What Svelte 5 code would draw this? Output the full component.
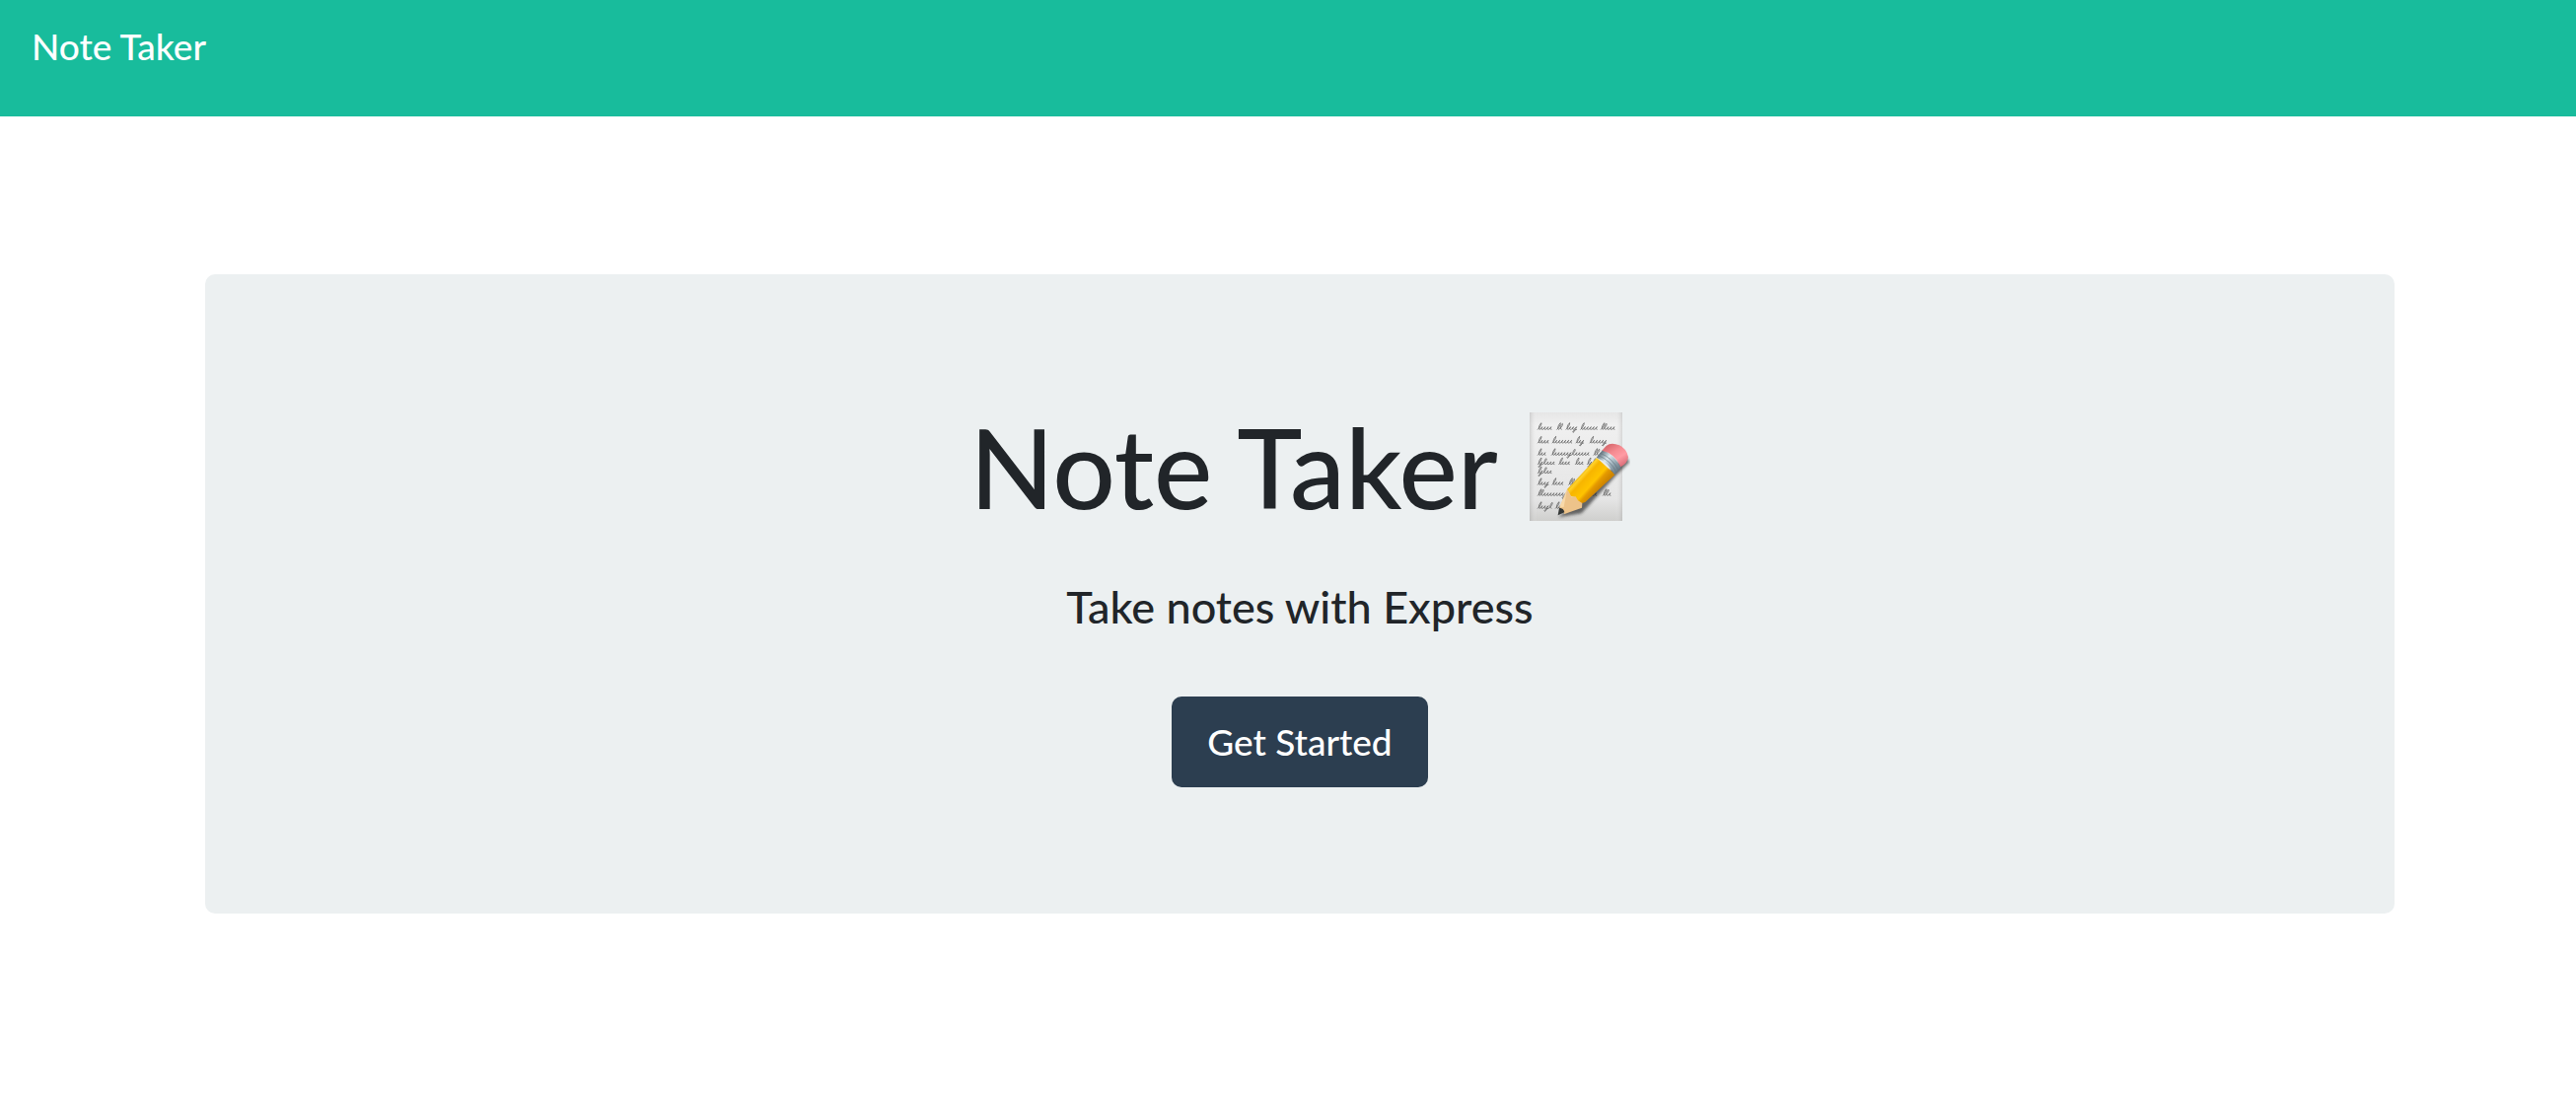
<script>
  // Word lengths for each handwritten line on the memo sheet.
  const lines = [
    { y: 109, words: [46, 16, 32, 50, 42] },
    { y: 150, words: [32, 60, 30, 52] },
    { y: 187, words: [30, 116, 32] },
    { y: 215, words: [52, 38, 24, 34] },
    { y: 242, words: [46] },
    { y: 277, words: [32, 38, 34] },
    { y: 310, words: [92, 30, 40, 26] },
    { y: 349, words: [42, 26] }
  ];

  function scribble(y, words) {
    let x = 85;
    let path = '';
    for (const [w, length] of words.entries()) {
      const steps = Math.round(length / 9) - 1;
      path += `M${x} ${y}c5 -4 12 -15 11 -20c-5 3 -11 17 -6 20`;
      for (let i = 1; i <= steps; i++) {
        const kind = (i * 5 + w * 3 + y) % 9;
        if (kind === 0) path += 'c8 -4 15 -16 12 -18c-5 2 -10 17 -3 18';
        else if (kind === 4) path += 'c4 -2 7 -6 9 -8c-4 6 -7 17 -11 17c-4 -3 5 -8 11 -9';
        else path += 'c4 -1 8 -5 9 -8c-3 1 -6 8 0 8';
      }
      x += length + 12;
    }
    return path;
  }

  const writing = lines.map((line) => scribble(line.y, line.words)).join('');
</script>

<nav class="navbar">
  <a class="brand" href="/">Note Taker</a>
</nav>

<main class="page">
  <section class="hero">
    <h1>
      <span>Note Taker</span>
      <svg class="memo" viewBox="60 57 306 330" role="img" aria-label="Memo">
        <defs>
          <linearGradient id="sheet" x1="0" y1="0" x2="0" y2="1">
            <stop offset="0" stop-color="#e6e6e6" />
            <stop offset="0.12" stop-color="#f0f0f0" />
            <stop offset="0.8" stop-color="#e5e5e5" />
            <stop offset="1" stop-color="#cfcfcd" />
          </linearGradient>
          <linearGradient id="edge">
            <stop offset="0" stop-color="#999" stop-opacity="0.35" />
            <stop offset="0.08" stop-color="#fff" stop-opacity="0" />
            <stop offset="0.92" stop-color="#fff" stop-opacity="0" />
            <stop offset="1" stop-color="#999" stop-opacity="0.3" />
          </linearGradient>
          <linearGradient id="body" gradientUnits="userSpaceOnUse" x1="212" y1="240" x2="270" y2="292">
            <stop offset="0" stop-color="#d99a00" />
            <stop offset="0.16" stop-color="#ffd22b" />
            <stop offset="0.3" stop-color="#f7b500" />
            <stop offset="0.65" stop-color="#ffc400" />
            <stop offset="0.78" stop-color="#e59a00" />
            <stop offset="1" stop-color="#ce8500" />
          </linearGradient>
          <linearGradient id="metal" gradientUnits="userSpaceOnUse" x1="276" y1="184" x2="332" y2="238">
            <stop offset="0" stop-color="#71818b" />
            <stop offset="0.3" stop-color="#dce9ef" />
            <stop offset="0.65" stop-color="#91a4af" />
            <stop offset="1" stop-color="#60717c" />
          </linearGradient>
          <linearGradient id="rubber" gradientUnits="userSpaceOnUse" x1="304" y1="152" x2="345" y2="218">
            <stop offset="0" stop-color="#d8686d" />
            <stop offset="0.35" stop-color="#f58b91" />
            <stop offset="0.65" stop-color="#ff9ca4" />
            <stop offset="1" stop-color="#db6e79" />
          </linearGradient>
          <filter id="soft" x="-20%" y="-20%" width="140%" height="140%">
            <feGaussianBlur stdDeviation="4" />
          </filter>
        </defs>
        <rect x="60" y="57" width="282" height="330" fill="url(#sheet)" />
        <rect x="60" y="57" width="282" height="330" fill="url(#edge)" />
        <path class="ink" d={writing} />
        <path d="M148 376L218 364L322 250L364 208L350 190L190 340Z" fill="#222" opacity="0.65" filter="url(#soft)" />
        <path d="M264 195L174 291L181 307L186 313L197 314L201 325L217 334L229 330L320 246Z" fill="url(#body)" />
        <path d="M174 291L151 346L166 366L219 347L220 333L207 325L200 313L187 315L182 303Z" fill="#edc38a" />
        <path d="M174 291L164 345L151 346Z" fill="#f8d9a9" />
        <path d="M150 347L146 370L166 361Q164 348 150 347Z" fill="#343735" />
        <path d="M263 194L282 171Q313 181 338 224L318 247Q301 210 263 194Z" fill="url(#metal)" />
        <path d="M269 188Q307 203 324 240M275 181Q313 196 330 233" class="ridge" />
        <path d="M280 173L293 159Q307 147 333 157Q356 168 360 193Q358 213 337 223Q319 181 280 173Z" fill="url(#rubber)" />
      </svg>
    </h1>
    <h4>Take notes with Express</h4>
    <a class="button" href="/notes">Get Started</a>
  </section>
</main>

<style>
  :global(body) {
    margin: 0;
    background: #fff;
    color: #212529;
    font-family: Lato, "Liberation Sans", sans-serif;
    font-weight: 500;
  }

  .navbar {
    box-sizing: border-box;
    min-height: 118px;
    padding: 24px 32px;
    background: #18bc9c;
  }

  .brand {
    display: inline-block;
    color: #fff;
    font-size: 37px;
    line-height: 46px;
    text-decoration: none;
  }

  .page {
    padding: 160px 0 0 24px;
  }

  .hero {
    box-sizing: border-box;
    display: flex;
    flex-direction: column;
    align-items: center;
    max-width: 2220px;
    margin: 0 auto;
    padding: 128px 64px;
    border-radius: 10px;
    background: #ecf0f1;
  }

  h1 {
    display: flex;
    align-items: center;
    gap: 32px;
    margin: 0 0 48px;
    font-size: 112px;
    font-weight: 500;
    line-height: 134px;
  }

  .memo {
    width: 102px;
    height: 110px;
  }

  .ink {
    fill: none;
    stroke: #4d4d4d;
    stroke-width: 2;
    stroke-linecap: round;
  }

  .ridge {
    fill: none;
    stroke: #667681;
    stroke-width: 2;
  }

  h4 {
    margin: 0 0 64px;
    font-size: 45px;
    font-weight: 500;
    line-height: 54px;
  }

  .button {
    padding: 23px 36px;
    border-radius: 10px;
    background: #2c3e50;
    color: #fff;
    font-size: 37px;
    line-height: 46px;
    text-decoration: none;
  }
</style>
